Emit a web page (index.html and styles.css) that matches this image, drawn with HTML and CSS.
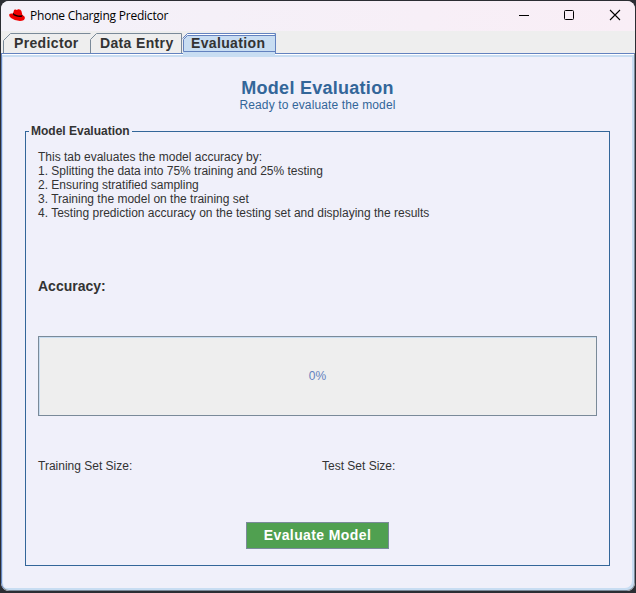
FILE: index.html
```html
<!DOCTYPE html>
<html lang="en">
<head>
<meta charset="utf-8">
<title>Phone Charging Predictor</title>
<link rel="stylesheet" href="styles.css">
</head>
<body>
<div class="window">
  <header class="titlebar">
    <svg class="logo" width="16" height="13" viewBox="0 0 16 13">
      <path d="M4 4.5 5 1.2Q5.4.2 6.6.6l1.2.4L9.2.3Q11.5 0 12.4 2l1 3.9Q16 7 15.9 9q-.3 3-5 3Q5.500 11.800 2 9.100-.3 7.200.2 5.500.8 4 4 4.500Z" fill="#f00000"/>
      <path d="M4 4.500Q3.400 6 6 7.100q4.500 1.600 7 .6.600-.5.400-1.800-2 1.200-5 .4Q5 5.500 4 3.700Z" fill="#180000"/>
    </svg>
    <h1 class="caption">Phone Charging Predictor</h1>
    <svg class="controls" width="104" height="12" viewBox="0 0 104 12" fill="none" stroke="#000">
      <path d="M0 6.500h10"/>
      <rect x="45.500" y="1.500" width="9" height="9" rx="1"/>
      <path d="M91 1l10 10M101 1 91 11" stroke-width="1.100"/>
    </svg>
  </header>
  <nav class="tabs">
    <div class="tab tab-predictor">
      <svg class="outline" width="88" height="20"><path d="M.5 20V7.500L7.500.5H87.500"/></svg>
      <span>Predictor</span>
    </div>
    <div class="tab tab-entry">
      <svg class="outline" width="92" height="20"><path d="M.5 20V6.500L6.500.5H91.500V20"/></svg>
      <span>Data Entry</span>
    </div>
    <div class="tab tab-evaluation">
      <svg class="outline selected" width="94" height="23">
        <path class="fill" d="M1 23V6L6 1H93V23Z"/>
        <path class="shine" d="M5 1.500H92"/>
        <path d="M.5 5.500 5.500.5H93.500V20M1.500 18.500V6.500L5.500 2.500H93M1.500 18.500H93"/>
      </svg>
      <span>Evaluation</span>
    </div>
  </nav>
  <main class="panel">
    <h2 class="heading">Model Evaluation</h2>
    <p class="status"><span>Ready to evaluate the model</span></p>
    <fieldset class="group">
      <legend><span>Model Evaluation</span></legend>
      <div class="description">
        <p class="d0">This tab evaluates the model accuracy by:</p>
        <p class="d1">1. Splitting the data into 75% training and 25% testing</p>
        <p class="d2">2. Ensuring stratified sampling</p>
        <p class="d3">3. Training the model on the training set</p>
        <p class="d4">4. Testing prediction accuracy on the testing set and displaying the results</p>
      </div>
      <p class="accuracy">Accuracy:</p>
      <div class="progress">0%</div>
      <div class="sizes"><span>Training Set Size:</span><span>Test Set Size:</span></div>
      <button class="evaluate"><span>Evaluate Model</span></button>
    </fieldset>
  </main>
</div>
</body>
</html>
```
FILE: styles.css
```css
* { box-sizing: border-box; }
html { background: #2b2d33; }
body { margin: 0; width: 636px; height: 593px; padding: 1px 1px 2px; overflow: hidden; font: 12px/14px "Liberation Sans", Arial, sans-serif; color: #333; }
h1, h2, p { margin: 0; }
.window { height: 590px; border-radius: 8px; background: #eee; overflow: hidden; display: flex; flex-direction: column; }
.titlebar { height: 30px; display: flex; align-items: center; padding: 0 12px 0 8px; background: linear-gradient(90deg, #f3f1f9, #f9eef6); }
.logo { flex: none; margin-top: -1px; }
.caption { margin-left: 5px; font: 400 12px/16px "Open Sans", "Noto Sans", sans-serif; letter-spacing: -.22px; color: #000; white-space: nowrap; }
.controls { margin-left: auto; margin-top: -2px; }
.tabs { height: 22px; padding: 2px 0 0 2px; display: flex; background: #eee; }
.tab { position: relative; height: 20px; font: bold 14px/20px "Liberation Sans", Arial, sans-serif; letter-spacing: .35px; white-space: nowrap; }
.tab span { position: relative; }
.tab-predictor { width: 87px; padding-left: 11px; }
.tab-entry { width: 92px; padding-left: 10px; }
.tab-evaluation { width: 94px; padding-left: 9px; z-index: 1; }
.outline { position: absolute; left: 0; top: 0; fill: none; stroke: #7a8a99; }
.selected { stroke: #6382bf; }
.outline .fill { fill: #c8ddf2; stroke: none; }
.outline .shine { stroke: #fff; }
.panel { position: relative; flex: 1; display: flex; flex-direction: column; border: 1px solid #6382bf; border-right-color: #7a8a99; border-bottom-color: #7a8a99; border-radius: 0 0 8px 8px; background: #f0f0fa; box-shadow: inset 0 1px #fff, inset 0 3px #c8ddf2, inset -2px -2px #c8ddf2, inset 1px 0 #c8ddf2; padding: 24px 24px 23px 23px; }
.heading { font: bold 18px/20px "Liberation Sans", Arial, sans-serif; color: #336699; text-align: center; letter-spacing: .27px; }
.status { height: 14px; color: #336699; text-align: center; letter-spacing: .12px; }
.group { flex: none; height: 442px; min-width: 0; margin: 12px 0 0; padding: 12px; border: 1px solid #336699; }
.group { margin-top: 12px; display: flex; flex-direction: column; }
legend { margin-left: -9px; padding: 0 2px; font-weight: bold; line-height: 14px; }
.description { height: 128px; white-space: nowrap; }
.accuracy { height: 58px; font-size: 14px; line-height: 16px; font-weight: bold; }
.progress { height: 80px; border: 1px solid #7a8a99; box-shadow: inset 1px 1px #c8ddf2; background: #eee; color: #6382bf; text-align: center; line-height: 78px; }
.sizes { display: grid; grid-template-columns: 284px 1fr; margin-top: 43px; height: 14px; }
.evaluate { display: block; width: 143px; height: 27px; margin: 49px auto 0; padding: 0; border: 1px solid #7a8a99; border-radius: 0; background: #50a050; color: #fff; font: bold 14px/25px "Liberation Sans", Arial, sans-serif; letter-spacing: .4px; }
```
